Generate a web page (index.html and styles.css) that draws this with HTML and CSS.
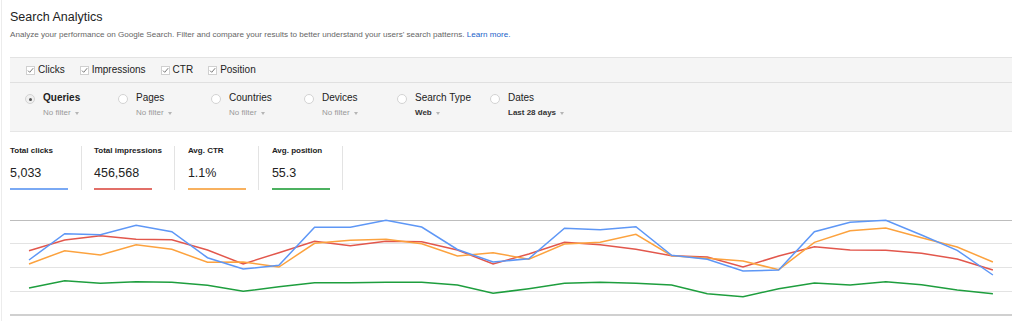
FILE: index.html
```html
<!DOCTYPE HTML>
<html>
	<head>
		<meta charset="utf-8">
		<title>Search Analytics</title>
		<link rel="stylesheet" href="styles.css">
	</head>
	<body>
		<div class="page">
			<h1 class="title">Search Analytics</h1>
			<p class="intro">Analyze your performance on Google Search. Filter and compare your results to better understand your users' search patterns. <a href="#">Learn more.</a></p>

			<div class="panel">
				<div class="toggles">
					<label class="toggle"><svg class="check" width="9" height="9" viewBox="0 0 9 9"><rect x="0.5" y="0.5" width="8" height="8" fill="#fff" stroke="#d0d0d0"/><path d="M2 4.6 L3.7 6.3 L7.2 2.2" fill="none" stroke="#777" stroke-width="1"/></svg>Clicks</label>
					<label class="toggle"><svg class="check" width="9" height="9" viewBox="0 0 9 9"><rect x="0.5" y="0.5" width="8" height="8" fill="#fff" stroke="#d0d0d0"/><path d="M2 4.6 L3.7 6.3 L7.2 2.2" fill="none" stroke="#777" stroke-width="1"/></svg>Impressions</label>
					<label class="toggle"><svg class="check" width="9" height="9" viewBox="0 0 9 9"><rect x="0.5" y="0.5" width="8" height="8" fill="#fff" stroke="#d0d0d0"/><path d="M2 4.6 L3.7 6.3 L7.2 2.2" fill="none" stroke="#777" stroke-width="1"/></svg>CTR</label>
					<label class="toggle"><svg class="check" width="9" height="9" viewBox="0 0 9 9"><rect x="0.5" y="0.5" width="8" height="8" fill="#fff" stroke="#d0d0d0"/><path d="M2 4.6 L3.7 6.3 L7.2 2.2" fill="none" stroke="#777" stroke-width="1"/></svg>Position</label>
				</div>
				<div class="filters">
					<div class="filter selected">
						<span class="radio"></span>
						<div>
							<div class="filter-name">Queries</div>
							<div class="filter-value">No filter<span class="caret"></span></div>
						</div>
					</div>
					<div class="filter">
						<span class="radio"></span>
						<div>
							<div class="filter-name">Pages</div>
							<div class="filter-value">No filter<span class="caret"></span></div>
						</div>
					</div>
					<div class="filter">
						<span class="radio"></span>
						<div>
							<div class="filter-name">Countries</div>
							<div class="filter-value">No filter<span class="caret"></span></div>
						</div>
					</div>
					<div class="filter">
						<span class="radio"></span>
						<div>
							<div class="filter-name">Devices</div>
							<div class="filter-value">No filter<span class="caret"></span></div>
						</div>
					</div>
					<div class="filter">
						<span class="radio"></span>
						<div>
							<div class="filter-name">Search Type</div>
							<div class="filter-value set">Web<span class="caret"></span></div>
						</div>
					</div>
					<div class="filter">
						<span class="radio"></span>
						<div>
							<div class="filter-name">Dates</div>
							<div class="filter-value set">Last 28 days<span class="caret"></span></div>
						</div>
					</div>
				</div>
			</div>

			<div class="totals">
				<div class="total">
					<div class="total-label">Total clicks</div>
					<div class="total-value">5,033</div>
					<div class="total-bar clicks"></div>
				</div>
				<div class="total">
					<div class="total-label">Total impressions</div>
					<div class="total-value">456,568</div>
					<div class="total-bar impressions"></div>
				</div>
				<div class="total">
					<div class="total-label">Avg. CTR</div>
					<div class="total-value">1.1%</div>
					<div class="total-bar ctr"></div>
				</div>
				<div class="total">
					<div class="total-label">Avg. position</div>
					<div class="total-value">55.3</div>
					<div class="total-bar position"></div>
				</div>
			</div>

			<svg class="chart" width="1002" height="121" viewBox="10 200 1002 121">
				<line x1="10" y1="220.5" x2="1012" y2="220.5" stroke="#bdbdbd" stroke-width="1"/>
				<line x1="10" y1="243.5" x2="1012" y2="243.5" stroke="#e3e3e3" stroke-width="1"/>
				<line x1="10" y1="267.5" x2="1012" y2="267.5" stroke="#e3e3e3" stroke-width="1"/>
				<line x1="10" y1="291.5" x2="1012" y2="291.5" stroke="#e3e3e3" stroke-width="1"/>
				<line x1="10" y1="315" x2="1012" y2="315" stroke="#d0d0d0" stroke-width="2"/>
				<polyline fill="none" stroke="#e2574c" stroke-width="1.5" points="29,250.7 64.7,240 100.4,235.7 136.1,239.3 171.8,239.7 207.5,250 243.2,264 278.9,252.7 314.6,241.3 350.3,245.7 386,241.3 421.7,241.7 457.4,250 493.1,264 528.8,254 564.5,242.3 600.2,244.7 635.9,249.3 671.6,255.7 707.3,257 743,267 778.7,256 814.4,246.7 850.1,250 885.8,250.3 921.5,253.3 957.2,259 992.9,270"/>
				<polyline fill="none" stroke="#fca23e" stroke-width="1.5" points="29,264 64.7,250.7 100.4,255 136.1,244.7 171.8,249.3 207.5,262.3 243.2,262 278.9,267 314.6,243.3 350.3,240.3 386,239.3 421.7,243.7 457.4,256 493.1,252.7 528.8,259.3 564.5,244 600.2,242.3 635.9,234.3 671.6,255.7 707.3,258.3 743,261 778.7,269.7 814.4,242.3 850.1,230.7 885.8,228 921.5,237.7 957.2,247 992.9,262"/>
				<polyline fill="none" stroke="#5e97f6" stroke-width="1.5" points="29,260 64.7,233.7 100.4,234.7 136.1,225.3 171.8,231.7 207.5,257.7 243.2,269 278.9,265.3 314.6,227.3 350.3,227.3 386,220.3 421.7,227 457.4,249.5 493.1,262 528.8,258.7 564.5,228.3 600.2,229.7 635.9,226.7 671.6,255.3 707.3,259.3 743,271 778.7,270 814.4,231.7 850.1,222.3 885.8,220.3 921.5,235 957.2,250.3 992.9,275"/>
				<polyline fill="none" stroke="#1e9e3e" stroke-width="1.5" points="29,288 64.7,280.7 100.4,283.3 136.1,281.7 171.8,282.3 207.5,285.3 243.2,291.3 278.9,286.7 314.6,282.7 350.3,282.7 386,282.3 421.7,282.3 457.4,285 493.1,293.3 528.8,288.7 564.5,283.3 600.2,282.3 635.9,283.3 671.6,285 707.3,293.7 743,296.7 778.7,288.7 814.4,283 850.1,285 885.8,281.7 921.5,284.7 957.2,290 992.9,293.7"/>
			</svg>
		</div>
	</body>
</html>
```

FILE: styles.css
```css
* { margin: 0; padding: 0; }
body {
	color: #222;
	background: #fff;
	font-family: 'Liberation Sans', Arial, sans-serif;
	overflow: hidden;
}
.page {
	margin-left: 1px;
	border-left: 1px solid #ececec;
	padding: 0 12px 0 8px;
	height: 321px;
}
.title {
	font-size: 12.5px;
	font-weight: normal;
	line-height: 15px;
	padding-top: 10px;
	color: #222;
}
.intro {
	font-size: 8.1px;
	line-height: 10px;
	color: #666;
	margin-top: 5px;
}
.intro a {
	color: #1a62c9;
	text-decoration: none;
}
.panel {
	margin-top: 17px;
	background: #f5f5f5;
	border-top: 1px solid #e3e3e3;
	border-bottom: 1px solid #e6e6e6;
}
.toggles {
	display: flex;
	gap: 15px;
	height: 24px;
	line-height: 24px;
	padding-left: 16px;
	font-size: 10px;
	border-bottom: 1px solid #e0e0e0;
}
.toggle {
	display: flex;
	align-items: center;
	gap: 3px;
}
.check {
	display: block;
}
.filters {
	display: flex;
	height: 48px;
	padding-left: 15px;
	box-sizing: border-box;
	padding-top: 9px;
}
.filter {
	display: flex;
	width: 93px;
}
.radio {
	width: 8px;
	height: 8px;
	border: 1px solid #d3d3d3;
	border-radius: 50%;
	background: #fff;
	margin: 2px 8px 0 0;
	display: flex;
	align-items: center;
	justify-content: center;
	flex-shrink: 0;
}
.selected .radio {
	background: #f0f0f0;
}
.selected .radio:after {
	content: "";
	width: 3px;
	height: 3px;
	border-radius: 50%;
	background: #555;
}
.filter-name {
	font-size: 10px;
	line-height: 12px;
	color: #222;
}
.selected .filter-name {
	font-weight: bold;
}
.filter-value {
	font-size: 8px;
	line-height: 12px;
	margin-top: 3px;
	color: #999;
	display: flex;
	align-items: center;
}
.filter-value.set {
	color: #333;
	font-weight: bold;
}
.caret {
	width: 0;
	height: 0;
	border-left: 2.5px solid transparent;
	border-right: 2.5px solid transparent;
	border-top: 3px solid #b5b5b5;
	margin-left: 4px;
}
.totals {
	display: flex;
	margin-top: 14px;
}
.total {
	padding: 0 12.5px;
	border-right: 1px solid #e3e3e3;
}
.total:first-child {
	padding-left: 0;
}
.total-label {
	font-size: 8px;
	line-height: 10px;
	font-weight: bold;
	color: #222;
}
.total-value {
	font-size: 12.5px;
	line-height: 15px;
	margin-top: 10px;
	color: #222;
}
.total-bar {
	width: 58px;
	height: 2px;
	margin-top: 7px;
}
.total-bar.clicks { background: #7aa9f4; }
.total-bar.impressions { background: #e26f68; }
.total-bar.ctr { background: #f8b15f; }
.total-bar.position { background: #4cb160; }
.chart {
	display: block;
	margin-top: 10px;
}
```
